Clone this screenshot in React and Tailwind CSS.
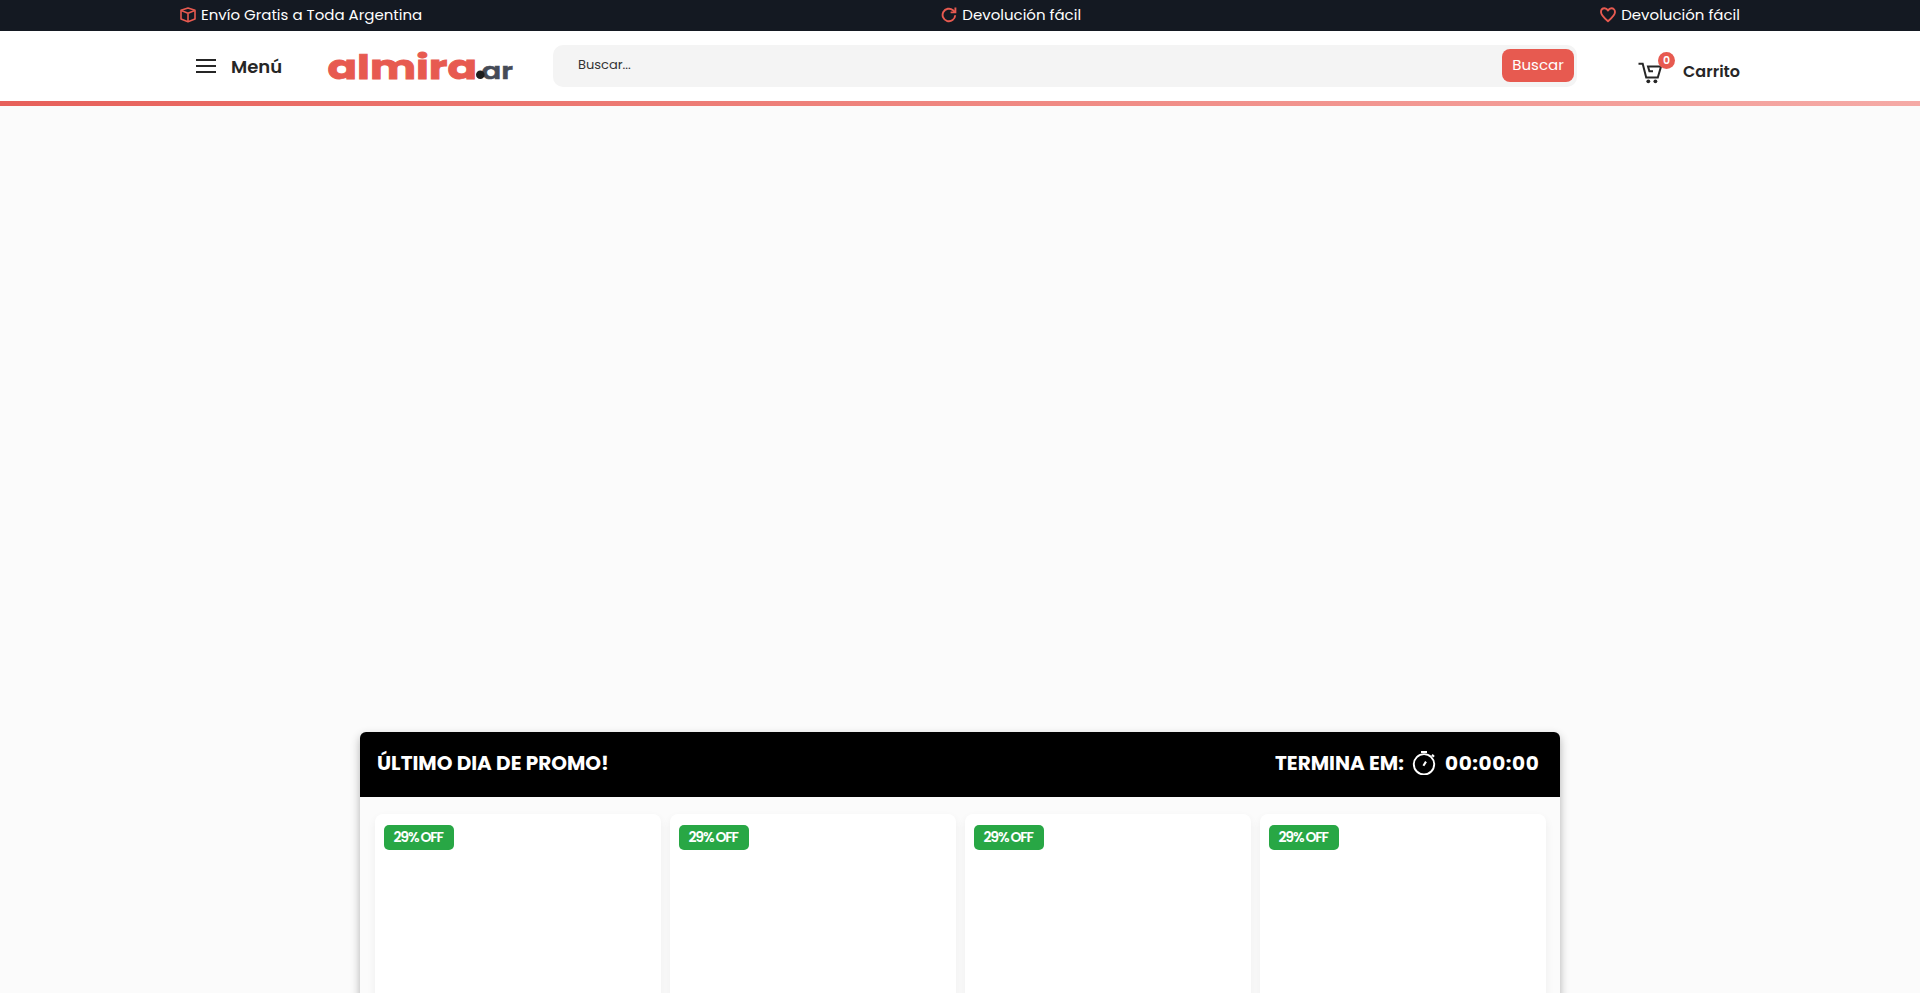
import React from "react";

const products = [1, 2, 3, 4];

const BoxIcon = () => (
  <svg className="h-4 w-4 shrink-0" viewBox="0 0 16 16" fill="none" stroke="#e75a50" strokeWidth="1.6" strokeLinejoin="round">
    <path d="M8 1 15 3.3V12L8 14.8 1 12V3.3Z" />
    <path d="M1.3 3.6 8 6.2l6.7-2.6M8 6.2v8.4" />
  </svg>
);

const ReturnIcon = () => (
  <svg className="h-4 w-4 shrink-0" viewBox="0 0 16 16" fill="none" stroke="#e75a50" strokeWidth="1.9">
    <path d="M14.2 8.3A6.3 6.3 0 1 1 12 3.2L13.8 5" />
    <path d="M14.4 .6V5.4H9.6" />
  </svg>
);

const HeartIcon = () => (
  <svg className="h-4 w-4 shrink-0" viewBox="0 0 16 16" fill="none" stroke="#e75a50" strokeWidth="1.9" strokeLinejoin="round">
    <path d="M8 14.2C4.4 11.3 1 8.5 1 5.1 1 2.8 2.6 1.3 4.5 1.3 6 1.3 7.2 2.1 8 3.5c.8-1.4 2-2.2 3.5-2.2 1.9 0 3.5 1.5 3.5 3.8 0 3.4-3.4 6.2-7 9.1Z" />
  </svg>
);

const CartIcon = () => (
  <svg className="h-6 w-6" viewBox="0 0 24 24" fill="none" stroke="#262626" strokeWidth="2">
    <path d="M.5 3.8h4.2L8.2 17.5h11.6L23 6.5H10l1.4 4.8h3.6" />
    <circle cx="10.3" cy="21.3" r="1.9" fill="#262626" stroke="none" />
    <circle cx="17.4" cy="21.3" r="1.9" fill="#262626" stroke="none" />
  </svg>
);

const TimerIcon = () => (
  <svg className="h-6 w-6" viewBox="0 0 24 24" fill="none" stroke="#fff" strokeWidth="1.9">
    <circle cx="12" cy="13.3" r="10.2" />
    <path d="M9 .9h6M20 3.8l2 2M11.4 14.8l2.6-4.2" strokeWidth="2.1" />
  </svg>
);

const Logo = () => (
  <svg className="h-[36px] w-[190px] overflow-visible" viewBox="0 0 190 36" fontFamily="Poppins, Inter, sans-serif" fontWeight="700">
    <text x="0.5" y="31" fontSize="32.5" fill="#e75a50" stroke="#e75a50" strokeWidth=".8" textLength="149.5" lengthAdjust="spacingAndGlyphs">
      almira
    </text>
    <text x="154.5" y="31" fontSize="22.5" fontWeight="600" fill="#454b57" stroke="#454b57" strokeWidth=".5" textLength="31.5" lengthAdjust="spacingAndGlyphs">
      ar
    </text>
    <circle cx="153.3" cy="26.8" r="4.3" fill="#1d1d1d" />
  </svg>
);

function TopBar() {
  return (
    <div className="h-[31px] bg-[#141922] text-[15px] leading-[30px] text-white">
      <div className="mx-auto flex h-[30px] w-[1560px] items-center justify-between">
        <div className="flex items-center gap-[5px] whitespace-nowrap">
          <BoxIcon />
          Envío Gratis a Toda Argentina
        </div>
        <div className="flex items-center gap-[5px] whitespace-nowrap">
          <ReturnIcon />
          Devolución fácil
        </div>
        <div className="flex items-center gap-[5px] whitespace-nowrap">
          <HeartIcon />
          Devolución fácil
        </div>
      </div>
    </div>
  );
}

function Header() {
  return (
    <header className="bg-white">
      <div className="mx-auto flex h-[70px] w-[1560px] items-start">
        <button type="button" className="flex w-[147px] items-center pt-[22px] pl-4">
          <span className="-mt-[3px] flex w-5 flex-col gap-1">
            <span className="h-0.5 bg-[#262626]" />
            <span className="h-0.5 bg-[#262626]" />
            <span className="h-0.5 bg-[#262626]" />
          </span>
          <span className="ml-[15px] text-[18px] leading-7 font-semibold text-[#262626]">Menú</span>
        </button>

        <div className="w-[226px] pt-[17px]">
          <Logo />
        </div>

        {/* Search */}
        <form className="mt-[14px] flex h-[42px] w-[1024px] items-start justify-between rounded-[10px] bg-[#f4f4f4] pt-1 pr-[3px] pl-[25px]">
          <span className="text-[13px] leading-8 text-[#333]">Buscar...</span>
          <button type="button" className="h-[33px] w-[72px] rounded-lg bg-[#e75a50] text-[15px] text-white">
            Buscar
          </button>
        </form>

        <div className="ml-auto flex pt-[29px]">
          <div className="relative">
            <CartIcon />
            <span className="absolute -top-2 left-[20px] h-[17px] w-[17px] rounded-full bg-[#e75a50] text-center text-[11px] leading-[17px] font-semibold text-white">
              0
            </span>
          </div>
          <span className="ml-[21px] text-[16px] leading-6 font-semibold text-[#262626]">Carrito</span>
        </div>
      </div>
      <div className="h-[5px] bg-gradient-to-r from-[#e7605a] to-[#f5aaa6]" />
    </header>
  );
}

function ProductCard() {
  return (
    <div className="h-[420px] w-[286px] rounded-lg bg-white px-[9.5px] py-[11px] shadow-[0_4px_10px_rgba(0,0,0,0.06)]">
      <span className="flex h-[25px] w-[70px] items-center rounded-[5px] bg-[#28a745] pl-[9.5px] text-[14px] font-semibold tracking-[-1.2px] whitespace-nowrap text-white">
        29% OFF
      </span>
    </div>
  );
}

function Promo() {
  return (
    <section className="mx-auto mt-[626px] w-[1200px] rounded-t-md shadow-[0_4px_10px_rgba(0,0,0,0.3)]">
      <div className="flex h-[65px] items-center justify-between rounded-t-md bg-black pr-[21px] pb-[3px] pl-[17px] text-[20px] font-bold text-white">
        <h2>ÚLTIMO DIA DE PROMO!</h2>
        <div className="flex items-center">
          <span className="w-[130px] whitespace-nowrap">TERMINA EM:</span>
          <span className="ml-[7px]">
            <TimerIcon />
          </span>
          <span className="ml-[9px] w-[94px] tracking-[0.6px] whitespace-nowrap">00:00:00</span>
        </div>
      </div>
      <div className="flex gap-[9px] bg-[#fbfbfb] px-[14.5px] py-[17px]">
        {products.map((id) => (
          <ProductCard key={id} />
        ))}
      </div>
    </section>
  );
}

export default function App() {
  return (
    <div className="h-[993px] overflow-hidden bg-[#fbfbfb] font-[Poppins,Inter,sans-serif]">
      <TopBar />
      <Header />
      <main>
        <Promo />
      </main>
    </div>
  );
}
